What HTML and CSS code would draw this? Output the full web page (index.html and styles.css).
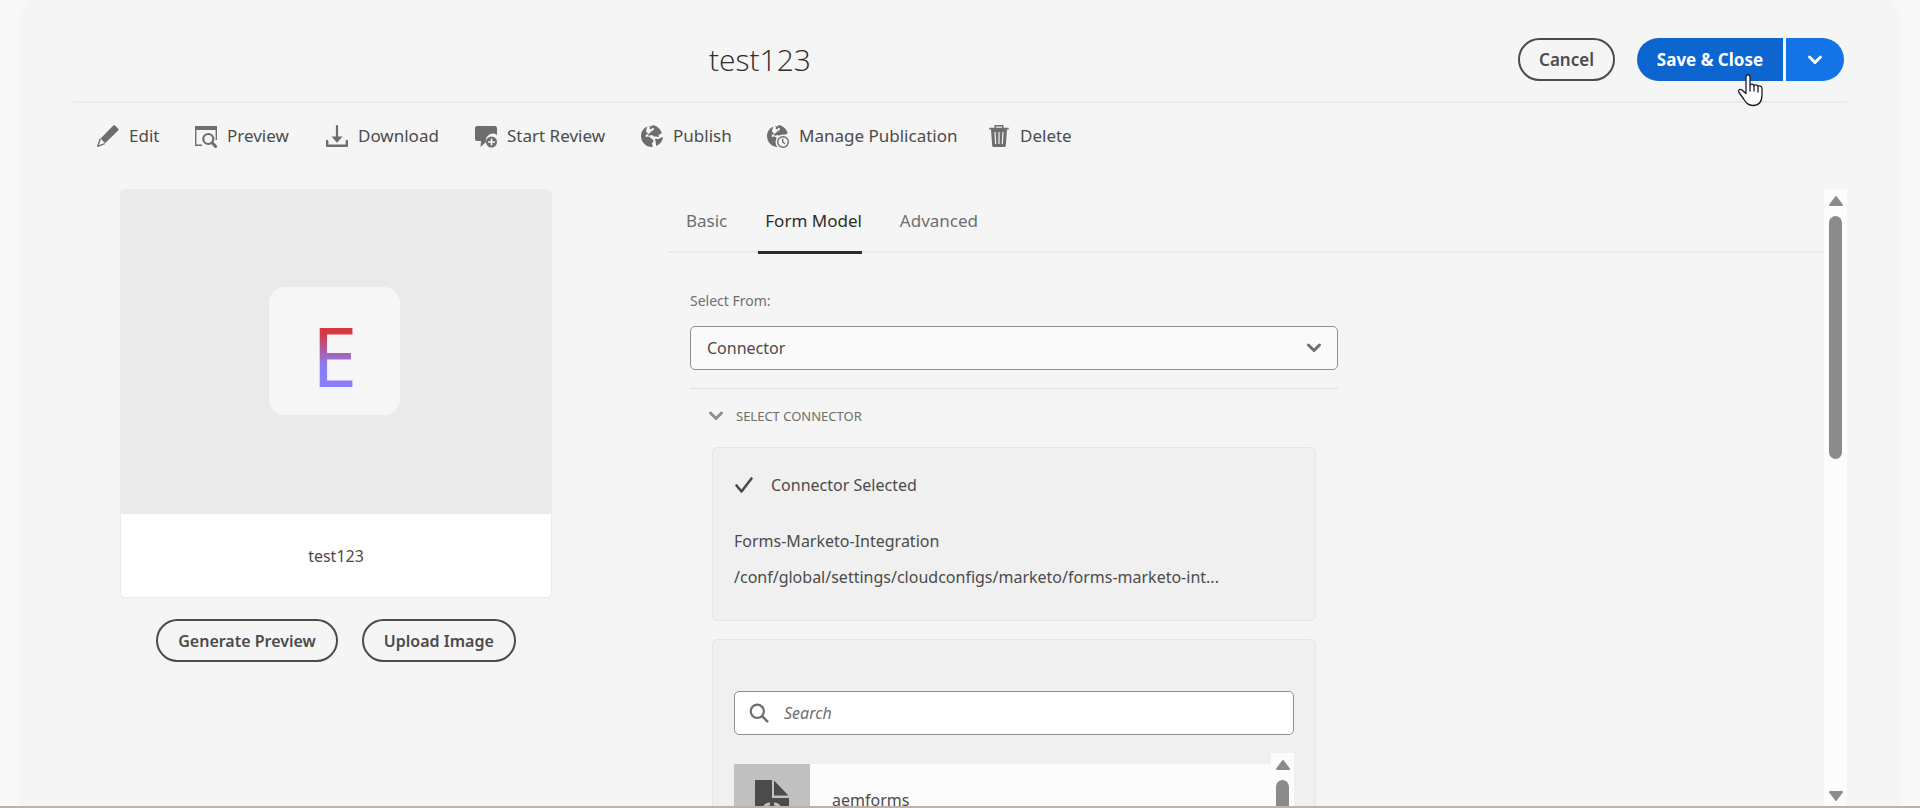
FILE: index.html
```html
<!DOCTYPE html>
<html lang="en">
<head>
<meta charset="utf-8">
<title>test123 – Properties</title>
<link rel="stylesheet" href="styles.css">
</head>
<body>
<svg class="defs" aria-hidden="true">
  <symbol id="globe" viewBox="0 0 22 22">
    <path d="M6.500 1.500C2.600 3.100 0 6.800 0 11c0 6.100 4.900 11 11 11h.6c.2-1.300-.6-2.200-.6-3.300 0-1 1.300-1.600 1.500-2.700.2-1.500-1.500-2-2.600-2.800-1.200-.9-1.500-1.700-3-1.600-.9.100-1.400.8-1.900.4-.6-.5-.3-1.700.2-2.300.6-.7 1.700-.2 1.900-.8.300-.8-1.300-1-1.800-1.900C4.600 5.600 5.800 3.300 6.500 1.500z"/>
    <path d="M8 .8l1.200 1.700L8.500 4l1.900.3 1-1.500 1.400.5.200 1.400-1.600 1-1.700 1.400L7 9.500l.8 1.500 2.400-1 2.200.8 1.400 1.200.9-.8 2 .8 1.500-.5-.8-1.800 2.300-.6 1-1.200C19.500 4.500 16.500.800 11.500 0L10.500 1.400z"/>
    <path d="M14 13.700l3.700.200 2 -1.200L22 12c-.4 4.100-3 7.500-6.800 9l-.4-3.200z"/>
  </symbol>
  <symbol id="chevron" viewBox="0 0 16 12">
    <path d="M2.500 3 8 8.500 13.500 3" fill="none" stroke="currentColor" stroke-width="3" stroke-linecap="round" stroke-linejoin="round"/>
  </symbol>
  <symbol id="arrow" viewBox="0 0 16 12">
    <path d="M8 2 14 10H2Z" fill="currentColor" stroke="currentColor" stroke-width="2" stroke-linejoin="round"/>
  </symbol>
</svg>

<main class="panel">
  <header class="header">
    <h1 class="title">test123</h1>
    <div class="header-actions">
      <button class="btn" type="button">Cancel</button>
      <div class="split">
        <button class="split-main" type="button">Save &amp; Close</button>
        <button class="split-more" type="button" aria-label="More save options"><svg class="chevron"><use href="#chevron"/></svg></button>
        <svg class="cursor" viewBox="0 0 26 33" aria-hidden="true"><path d="M9 19V3c0-3 4-3 4 0v9c0-2.500 4-2.500 4 .500 0-2.500 4-2 4 .500 0-2 4-1.500 4 1.500v6c0 7-3 11-9 11-5 0-7-3-9-6l-5-7c-1.500-2.500 1-4 3-2.500l4 3.500M13 12v5M17 12.500V17M21 13v5" fill="#fff" stroke="#1c1c2e" stroke-width="1.300" stroke-linejoin="round" stroke-linecap="round"/></svg>
      </div>
    </div>
  </header>

  <nav class="toolbar" aria-label="Form actions">
    <button class="action" type="button"><svg class="icon" viewBox="0 0 22 24"><path d="M16.300 1.600c.5-.5 1.200-.5 1.700 0l3.200 3.200c.5.500.5 1.200 0 1.700L8 19.300 3.600 14.400z"/><path d="M3.300 14.800.7 22.300l7-2.700" fill="none" stroke="currentColor" stroke-width="1.400" stroke-linejoin="round"/></svg>Edit</button>
    <button class="action" type="button"><svg class="icon" viewBox="0 0 22 24"><path d="M0 2h22v4H0z"/><path d="M.7 4v17.300H7M21.300 4v12" fill="none" stroke="currentColor" stroke-width="1.400"/><circle cx="13.300" cy="15" r="5" fill="none" stroke="currentColor" stroke-width="2.200"/><path d="m17 18.800 3.600 3.600" stroke="currentColor" stroke-width="3" stroke-linecap="round"/></svg>Preview</button>
    <button class="action" type="button"><svg class="icon" viewBox="0 0 22 24"><path d="M1.200 17v4.700h19.600V17" fill="none" stroke="currentColor" stroke-width="2.400" stroke-linecap="round" stroke-linejoin="round"/><path d="M11 2v11" stroke="currentColor" stroke-width="2.200" stroke-linecap="round"/><path d="M5.500 12.500h11L11 18.800z"/></svg>Download</button>
    <button class="action" type="button"><svg class="icon" viewBox="0 0 22 24"><path d="M2 2h18c1 0 2 1 2 2v7a7 7 0 0 0-11 7l-.5.500-5 4.500.500-6H2c-1 0-2-1-2-2V4c0-1 1-2 2-2z"/><circle cx="16.500" cy="18" r="5.500"/><path d="M16.500 14.500v7M13 18h7" stroke="#f5f5f5" stroke-width="1.600"/></svg>Start Review</button>
    <button class="action" type="button"><svg class="icon" viewBox="0 0 22 24"><use href="#globe" y="1" width="22" height="22"/></svg>Publish</button>
    <button class="action" type="button"><svg class="icon" viewBox="0 0 22 24"><use href="#globe" y="1" width="22" height="22"/><circle cx="16" cy="18" r="7.500" fill="#f5f5f5"/><circle cx="16" cy="18" r="5.300" fill="#f5f5f5" stroke="currentColor" stroke-width="1.400"/><path d="M15.700 14.800V18l2.300 1.700" fill="none" stroke="currentColor" stroke-width="1.400"/></svg>Manage Publication</button>
    <button class="action" type="button"><svg class="icon" viewBox="0 0 22 24"><path d="M7.200 4V1.700h7.600V4" fill="none" stroke="currentColor" stroke-width="1.400"/><path d="M1.300 3.700h19.400v1.900H1.300zM3 5.600h16l-1.200 16.200c0 .7-.5 1.200-1.200 1.200H5.400c-.7 0-1.200-.5-1.200-1.200z"/><path d="m7 8 .7 12M11 8v12M15 8l-.7 12" stroke="#f5f5f5" stroke-width="1.200"/></svg>Delete</button>
  </nav>

  <div class="content">
    <aside class="side">
      <figure class="card">
        <div class="card-preview"><div class="card-tile"><span class="card-letter">E</span></div></div>
        <figcaption class="card-name">test123</figcaption>
      </figure>
      <div class="side-actions">
        <button class="btn" type="button">Generate Preview</button>
        <button class="btn" type="button">Upload Image</button>
      </div>
    </aside>

    <section class="details">
      <div class="tabs" role="tablist">
        <button class="tab" type="button" role="tab">Basic</button>
        <button class="tab tab-active" type="button" role="tab" aria-selected="true">Form Model</button>
        <button class="tab" type="button" role="tab">Advanced</button>
      </div>

      <div class="form">
        <label class="label" for="source">Select From:</label>
        <div class="select-wrap">
          <select class="select" id="source"><option>Connector</option></select>
          <svg class="chevron select-chevron"><use href="#chevron"/></svg>
        </div>
        <div class="group">
          <button class="group-head" type="button" aria-expanded="true"><svg class="chevron"><use href="#chevron"/></svg>SELECT CONNECTOR</button>
          <div class="box selected">
            <p class="selected-head"><svg class="check" viewBox="0 0 20 18"><path d="m2.500 9.500 5 6L17.500 2.500" fill="none" stroke="currentColor" stroke-width="2.600" stroke-linecap="round" stroke-linejoin="round"/></svg>Connector Selected</p>
            <p class="line">Forms-Marketo-Integration</p>
            <p class="line">/conf/global/settings/cloudconfigs/marketo/forms-marketo-int...</p>
          </div>
          <div class="box picker">
            <div class="search-wrap">
              <svg class="search-icon" viewBox="0 0 20 20"><circle cx="8.300" cy="8.300" r="6.600" fill="none" stroke="currentColor" stroke-width="2.200"/><path d="m13.300 13.300 5 5" stroke="currentColor" stroke-width="2.600" stroke-linecap="round"/></svg>
              <input class="search" type="text" placeholder="Search" aria-label="Search">
            </div>
            <div class="list">
              <div class="item">
                <div class="item-thumb"><svg class="file" viewBox="0 0 34 40"><path d="M0 1C0 .400.400 0 1 0h16v18h17v21c0 .600-.4 1-1 1H1c-.6 0-1-.4-1-1z"/><path d="M19 0.500 33.500 15.500H19z"/><path d="M15 24c-4 0-5 1-5 4v2c0 2-1 3-2 3 1 0 2 1 2 3v4M19 24c4 0 5 1 5 4v2c0 2 1 3 2 3-1 0-2 1-2 3v4" fill="none" stroke="#c0c0c0" stroke-width="3"/></svg></div>
                <span class="item-name">aemforms</span>
              </div>
              <div class="scroll scroll-list"><svg class="arrow"><use href="#arrow"/></svg><div class="thumb thumb-list"></div></div>
            </div>
          </div>
        </div>
      </div>
    </section>
    <div class="scroll"><svg class="arrow"><use href="#arrow"/></svg><div class="thumb"></div><svg class="arrow arrow-down"><use href="#arrow"/></svg></div>
  </div>
</main>
</body>
</html>
```

FILE: styles.css
```css
* { box-sizing: border-box; }

body {
  margin: 0;
  height: 100vh;
  overflow: hidden;
  display: flex;
  background: #f8f8f8;
  border-bottom: 2px solid #bfb2ab;
  color: #4b4b4b;
  font: 16px/24px "Noto Sans", "Open Sans", sans-serif;
}

button, input, select {
  font: inherit;
  color: inherit;
  margin: 0;
}

button {
  background: none;
  border: 0;
  padding: 0;
  white-space: nowrap;
}

.defs { display: none; }

.panel {
  flex: 1;
  min-width: 0;
  display: flex;
  flex-direction: column;
  margin: -8px 19px 0 19px;
  padding: 8px 54px 0 54px;
  border-radius: 32px 32px 0 0;
  background: #f5f5f5;
}

.header {
  display: flex;
  align-items: center;
  height: 103px;
  padding: 18px 3px 0 0;
  border-bottom: 2px solid #eaeaea;
  flex: none;
}

.title {
  flex: 1;
  margin: 0;
  padding-right: 71px;
  text-align: center;
  color: #2c2c2c;
  font: 300 30px/40px "Open Sans", "Noto Sans", sans-serif;
}

.header-actions {
  display: flex;
  gap: 22px;
}

.btn {
  height: 43px;
  padding: 0 20px;
  border: 2px solid #4b4b4b;
  border-radius: 22px;
  font-weight: 600;
}

.header .btn {
  padding: 0 19px;
  font-size: 17px;
}

.split {
  position: relative;
  display: flex;
  gap: 3px;
  color: #fff;
  font-size: 17px;
  font-weight: 700;
}

.split-main {
  height: 43px;
  width: 146px;
  border-radius: 22px 0 0 22px;
  background: #0d66d0;
}

.split-more {
  width: 58px;
  border-radius: 0 22px 22px 0;
  background: #1473e6;
}

.cursor {
  position: absolute;
  left: 100px;
  top: 36px;
  width: 26px;
  height: 33px;
}

.chevron {
  width: 16px;
  height: 12px;
  flex: none;
}

.toolbar {
  flex: none;
  display: grid;
  grid-template-columns: 98px 131px 149px 166px 126px 221px auto;
  padding: 18px 0 0 24px;
  height: 86px;
  align-items: start;
  font-size: 17px;
}

.action {
  display: flex;
  align-items: center;
  gap: 10px;
  height: 30px;
}

.icon {
  width: 22px;
  height: 24px;
  fill: #6e6e6e;
  color: #6e6e6e;
  flex: none;
}

.content {
  flex: 1;
  min-height: 0;
  display: flex;
}

.side {
  width: 432px;
  margin: 0 116px 0 47px;
  flex: none;
}

.card {
  margin: 0;
  border: 1px solid #eaeaea;
  border-radius: 5px;
  background: #fff;
  overflow: hidden;
}

.card-preview {
  height: 324px;
  padding: 0 3px 3px 0;
  display: flex;
  align-items: center;
  justify-content: center;
  background: #eaeaea;
}

.card-tile {
  width: 131px;
  height: 128px;
  border-radius: 16px;
  background: #f6f6f6;
  text-align: center;
}

.card-letter {
  display: inline-block;
  font-size: 82px;
  line-height: 136px;
  background: linear-gradient(#d7373f 34%, #8a7dfa 58%);
  -webkit-background-clip: text;
  background-clip: text;
  color: transparent;
}

.card-name {
  height: 83px;
  line-height: 84px;
  text-align: center;
}

.side-actions {
  display: flex;
  justify-content: center;
  gap: 24px;
  margin-top: 21px;
}

.details {
  flex: 1;
  min-width: 0;
  overflow: hidden;
}

.tabs {
  display: flex;
  gap: 31px;
  height: 64px;
  padding-left: 11px;
  border-bottom: 2px solid #eaeaea;
}

.tab {
  height: 65px;
  padding: 0 0 2px 7px;
  color: #6e6e6e;
  font-size: 17px;
}

.tab-active {
  color: #2c2c2c;
  border-bottom: 3px solid #2c2c2c;
  padding-top: 1px;
  padding-bottom: 0;
}

.form {
  width: 670px;
  padding: 36px 0 0 22px;
}

.label {
  display: block;
  color: #6e6e6e;
  font-size: 14px;
}

.select-wrap {
  position: relative;
  margin-top: 13px;
}

.select {
  display: block;
  appearance: none;
  width: 100%;
  height: 44px;
  padding: 0 16px;
  border: 1px solid #909090;
  border-radius: 5px;
  background: #fafafa;
}

.select-chevron {
  position: absolute;
  right: 16px;
  top: 16px;
  color: #6e6e6e;
}

.group {
  margin-top: 18px;
  padding-top: 15px;
  border-top: 1px solid #e1e1e1;
}

.group-head {
  display: flex;
  align-items: center;
  gap: 12px;
  padding-left: 18px;
  height: 24px;
  color: #6e6e6e;
  font-size: 13px;
}

.group-head .chevron { color: #8e8e8e; }

.box {
  margin: 0 22px;
  border: 1px solid #e6e6e6;
  border-radius: 5px;
  background: #f0f0f0;
  padding: 0 21px;
}

.selected {
  margin-top: 19px;
  padding-top: 25px;
  padding-bottom: 25px;
}

.selected-head {
  display: flex;
  align-items: center;
  gap: 17px;
  margin: 0 0 26px 0;
}

.check {
  width: 20px;
  height: 18px;
}

.line {
  margin: 0;
  line-height: 36px;
  white-space: nowrap;
}

.picker {
  margin-top: 18px;
  padding-top: 51px;
}

.search-wrap { position: relative; }

.search {
  display: block;
  width: 100%;
  height: 44px;
  padding: 0 16px 0 49px;
  border: 1px solid #909090;
  border-radius: 5px;
  background: #fff;
}

.search::placeholder {
  color: #6e6e6e;
  font-style: italic;
  opacity: 1;
}

.search-icon {
  position: absolute;
  left: 15px;
  top: 12px;
  width: 20px;
  height: 20px;
  color: #6e6e6e;
}

.list {
  display: flex;
  margin-top: 18px;
  height: 200px;
}

.item {
  flex: 1;
  display: flex;
  align-items: center;
  gap: 22px;
  height: 72px;
  margin-top: 11px;
  background: #fbfbfb;
}

.item-thumb {
  display: flex;
  align-items: center;
  justify-content: center;
  width: 76px;
  height: 72px;
  background: #c0c0c0;
}

.file {
  width: 34px;
  height: 40px;
  fill: #4b4b4b;
}

.scroll {
  display: flex;
  flex-direction: column;
  align-items: center;
  width: 23px;
  padding: 6px 0 4px 0;
  background: #fcfcfc;
  color: #8b8b8b;
  flex: none;
}

.arrow {
  width: 16px;
  height: 12px;
  flex: none;
}

.arrow-down {
  margin-top: auto;
  transform: rotate(180deg);
}

.thumb {
  width: 13px;
  height: 40%;
  margin-top: 9px;
  border-radius: 7px;
  background: #8b8b8b;
}

.thumb-list { height: 60%; }
```
